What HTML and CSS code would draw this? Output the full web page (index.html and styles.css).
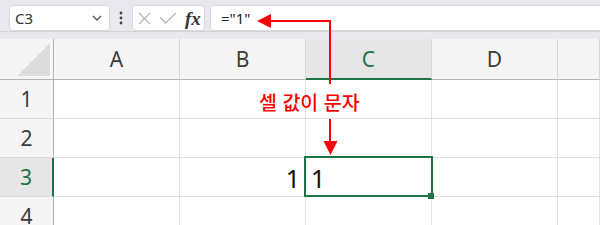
FILE: index.html
```html
<!DOCTYPE html>
<html lang="ko">
<head>
  <meta charset="UTF-8" />
  <title>셀 값이 문자</title>
  <link rel="stylesheet" href="styles.css">
</head>
<body>
  <div class="toolbar">
    <div class="namebox">
      <span>C3</span>
      <svg class="chevron" width="10" height="6" viewBox="0 0 10 6"><polyline points="1,1 5,5 9,1" /></svg>
    </div>
    <div class="more">
      <svg width="4" height="14" viewBox="0 0 4 14"><circle cx="2" cy="2" r="1.4" /><circle cx="2" cy="7" r="1.4" /><circle cx="2" cy="12" r="1.4" /></svg>
    </div>
    <div class="fxbox">
      <svg class="cancel" width="13" height="13" viewBox="0 0 13 13"><path d="M1 1 L12 12 M12 1 L1 12" /></svg>
      <svg class="enter" width="18" height="12" viewBox="0 0 18 12"><path d="M1 5 L6.5 11 L17 1" /></svg>
      <span class="fx">fx</span>
    </div>
    <div class="formula">="1"</div>
  </div>

  <div class="sheet">
    <div class="corner"><div class="tri"></div></div>
    <div class="colhead">A</div>
    <div class="colhead">B</div>
    <div class="colhead sel">C</div>
    <div class="colhead">D</div>
    <div class="colhead"></div>

    <div class="rowhead">1</div>
    <div class="cell"></div><div class="cell"></div><div class="cell"></div><div class="cell"></div><div class="cell"></div>

    <div class="rowhead">2</div>
    <div class="cell"></div><div class="cell"></div><div class="cell"></div><div class="cell"></div><div class="cell"></div>

    <div class="rowhead sel">3</div>
    <div class="cell"></div>
    <div class="cell num">1</div>
    <div class="cell text active">1</div>
    <div class="cell"></div><div class="cell"></div>

    <div class="rowhead">4</div>
    <div class="cell"></div><div class="cell"></div><div class="cell"></div><div class="cell"></div><div class="cell"></div>
  </div>

  <svg class="callout" width="600" height="225" viewBox="0 0 600 225">
    <path d="M269 21 H331 M330 20 V84 M330 119 V142" />
    <polygon points="257,21 271,14 271,28" />
    <polygon points="323.5,141 337.5,141 330.5,155" />
  </svg>
  <div class="note">셀 값이 문자</div>
</body>
</html>
```

FILE: styles.css
```css
body {
  margin: 0;
  width: 600px;
  height: 225px;
  overflow: hidden;
  background: #e8e8ee;
  font-family: "Noto Sans", "Open Sans", sans-serif;
  color: #333;
  position: relative;
}
.toolbar {
  display: flex;
  align-items: flex-start;
  height: 32px;
  box-sizing: border-box;
  padding: 5px 0 0 9px;
  border-bottom: 1px solid #d2d2d8;
  margin-bottom: 7px;
  overflow: hidden;
}
.namebox, .fxbox, .formula {
  height: 26px;
  box-sizing: border-box;
  background: white;
  border: 1px solid #d9d9df;
  border-radius: 4px;
  display: flex;
  align-items: center;
}
.namebox {
  width: 101px;
  padding: 0 7px 0 5px;
  justify-content: space-between;
  font-size: 15px;
}
.chevron polyline {
  fill: none;
  stroke: #555;
  stroke-width: 1.3;
}
.more {
  width: 22px;
  height: 26px;
  display: flex;
  align-items: center;
  justify-content: center;
}
.more circle {
  fill: #444;
}
.fxbox {
  width: 73px;
  padding-left: 5px;
}
.fxbox path {
  fill: none;
  stroke: #b8b8be;
  stroke-width: 1.3;
}
.enter {
  margin-left: 8px;
}
.fx {
  margin-left: 8px;
  font-family: "Liberation Serif", serif;
  font-style: italic;
  font-weight: bold;
  font-size: 19px;
  color: #333;
  line-height: 1;
}
.formula {
  flex: 1;
  margin-left: 5px;
  margin-right: -10px;
  padding-left: 10px;
  font-size: 15px;
  color: #222;
}
.sheet {
  display: grid;
  grid-template-columns: 54px 126px 126px 126px 126px 1fr;
  grid-template-rows: 41px;
  grid-auto-rows: 39px;
  background: white;
}
.sheet > div {
  box-sizing: border-box;
  border-right: 1px solid #e1e1e1;
  border-bottom: 1px solid #e1e1e1;
}
.corner {
  background: #f5f5f5;
  position: relative;
}
.sheet > .corner {
  border-right: 1px solid #b4b4b4;
  border-bottom: 1px solid #b4b4b4;
}
.tri {
  position: absolute;
  right: 3px;
  bottom: 3px;
  width: 33px;
  height: 33px;
  background: #dcdcdc;
  clip-path: polygon(100% 0, 100% 100%, 0 100%);
}
.colhead, .rowhead {
  background: #f5f5f5;
  display: flex;
  align-items: center;
  justify-content: center;
  font-size: 21px;
  color: #3c3c3c;
}
.sheet > .colhead {
  border-right: 1px solid #d8d8d8;
  border-bottom: 1px solid #b4b4b4;
}
.sheet > .rowhead {
  border-right: 1px solid #b4b4b4;
  border-bottom: 1px solid #dadada;
}
.sheet > .colhead.sel {
  background: #e6e6e6;
  color: #217346;
  border-bottom: 2px solid #217346;
}
.sheet > .rowhead.sel {
  background: #e6e6e6;
  color: #217346;
  border-right: 2px solid #217346;
}
.cell {
  display: flex;
  align-items: center;
  font-size: 25px;
  color: #111;
  padding: 2px 5px 0;
}
.num {
  justify-content: flex-end;
}
.active {
  position: relative;
}
.active::after {
  content: "";
  position: absolute;
  top: -2px;
  left: -2px;
  right: -2px;
  bottom: -1px;
  border: 2px solid #217346;
}
.active::before {
  content: "";
  position: absolute;
  right: -3px;
  bottom: -3px;
  width: 6px;
  height: 6px;
  background: #217346;
  z-index: 1;
}
.callout {
  position: absolute;
  left: 0;
  top: 0;
  pointer-events: none;
}
.callout path {
  fill: none;
  stroke: #ff0000;
  stroke-width: 2;
}
.callout polygon {
  fill: #ff0000;
}
.note {
  position: absolute;
  left: 259px;
  top: 88px;
  font-family: "Noto Sans CJK KR", sans-serif;
  font-weight: 500;
  font-size: 19.5px;
  color: #ff0000;
  line-height: 28px;
}
```
